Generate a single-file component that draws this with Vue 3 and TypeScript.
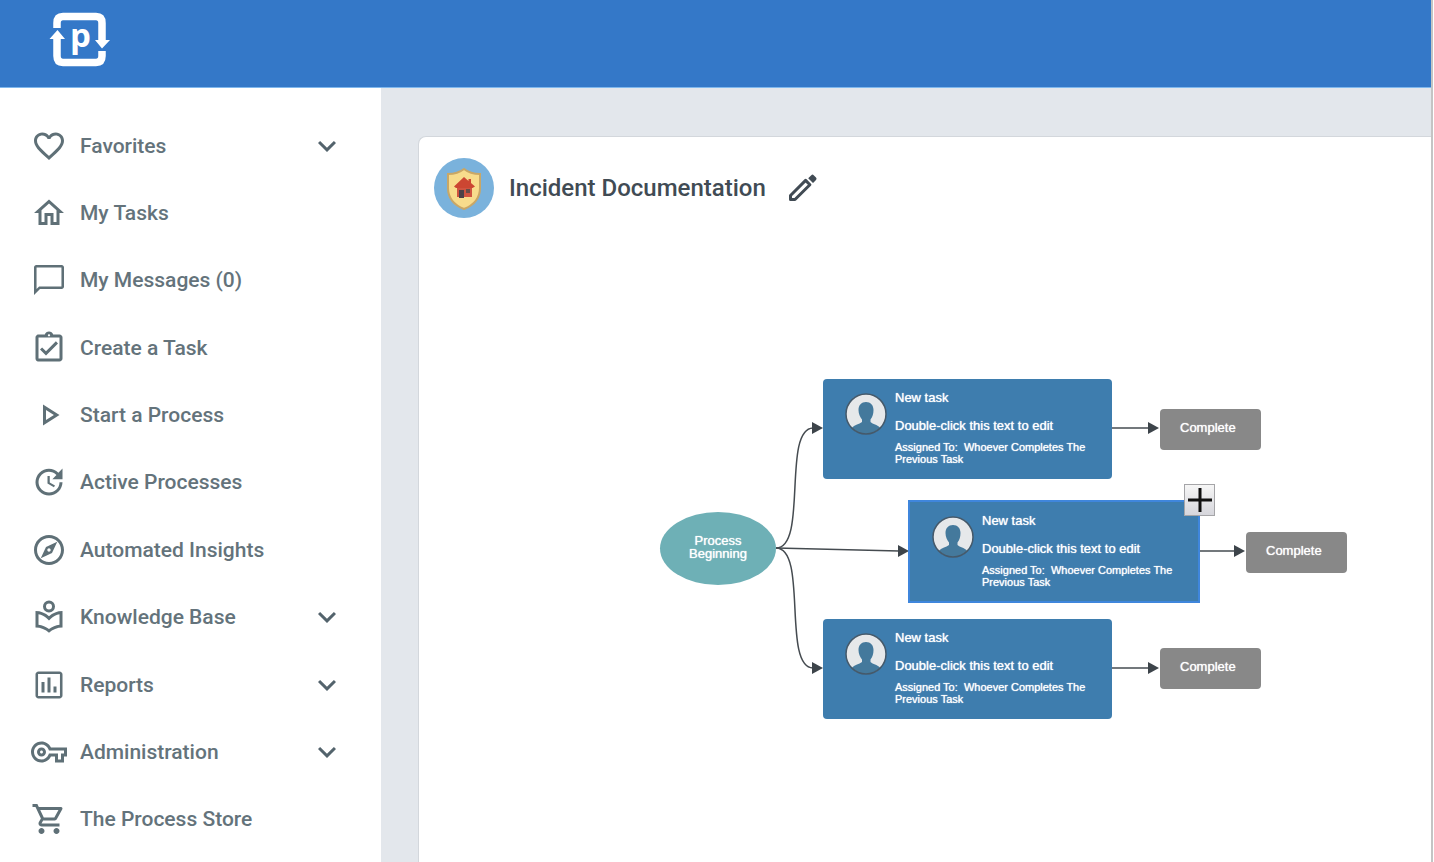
<script setup lang="ts">
interface NavItem {
  label: string
  paths: string[]
  expandable?: boolean
}

interface TaskNode {
  id: number
  place: string
  selected?: boolean
}

const navItems: NavItem[] = [
  {
    label: 'Favorites',
    expandable: true,
    paths: [
      'M16.5 3c-1.74 0-3.41.81-4.5 2.09C10.91 3.81 9.24 3 7.5 3 4.42 3 2 5.42 2 8.5c0 3.78 3.4 6.86 8.55 11.54L12 21.35l1.45-1.32C18.6 15.36 22 12.28 22 8.5 22 5.42 19.58 3 16.5 3zm-4.4 15.55l-.1.1-.1-.1C7.14 14.24 4 11.39 4 8.5 4 6.5 5.5 5 7.5 5c1.54 0 3.04.99 3.57 2.36h1.87C13.46 5.99 14.96 5 16.5 5c2 0 3.5 1.5 3.5 3.5 0 2.89-3.14 5.74-7.9 10.05z',
    ],
  },
  {
    label: 'My Tasks',
    paths: ['M12 5.69l5 4.5V18h-2v-6H9v6H7v-7.81l5-4.5M12 3L2 12h3v8h6v-6h2v6h6v-8h3'],
  },
  {
    label: 'My Messages (0)',
    paths: [
      'M20.5 2h-17C2.7 2 2 2.7 2 3.5V22l4-4h14.5c.8 0 1.5-.7 1.5-1.5v-13c0-.8-.7-1.5-1.5-1.5zm-.2 14.3H5.4l-1.7 1.7V3.7h16.6v12.6z',
    ],
  },
  {
    label: 'Create a Task',
    paths: [
      'M18 9l-1.41-1.42L10 14.17l-2.59-2.58L6 13l4 4zm1-6h-4.18C14.4 1.84 13.3 1 12 1c-1.3 0-2.4.84-2.82 2H5c-.14 0-.27.01-.4.04-.39.08-.74.28-1.01.55-.18.18-.33.4-.43.64-.1.23-.16.49-.16.77v14c0 .27.06.54.16.78s.25.45.43.64c.27.27.62.47 1.01.55.13.02.26.03.4.03h14c1.1 0 2-.9 2-2V5c0-1.1-.9-2-2-2zm-7-.25c.41 0 .75.34.75.75s-.34.75-.75.75-.75-.34-.75-.75.34-.75.75-.75zM19 19H5V5h14v14z',
    ],
  },
  {
    label: 'Start a Process',
    paths: ['M10 8.64L15.27 12 10 15.36V8.64M8 5v14l11-7L8 5z'],
  },
  {
    label: 'Active Processes',
    paths: [
      'M21 10.12H14.22L16.96 7.3C14.23 4.6 9.81 4.5 7.08 7.2C4.35 9.91 4.35 14.28 7.08 17C9.81 19.7 14.23 19.7 16.96 17C18.32 15.65 19 14.08 19 12.1H21C21 14.08 20.12 16.65 18.36 18.39C14.85 21.87 9.15 21.87 5.64 18.39C2.14 14.92 2.11 9.28 5.62 5.81C9.13 2.34 14.76 2.34 18.27 5.81L21 3V10.12M12.5 8V12.25L16 14.33L15.28 15.54L11 13V8H12.5Z',
    ],
  },
  {
    label: 'Automated Insights',
    paths: [
      'M12 2C6.48 2 2 6.48 2 12s4.48 10 10 10 10-4.48 10-10S17.52 2 12 2zm0 18c-4.41 0-8-3.59-8-8s3.59-8 8-8 8 3.59 8 8-3.59 8-8 8zm-5.5-2.5l7.51-3.49L17.5 6.5 9.99 9.99 6.5 17.5zm5.5-6.6c.61 0 1.1.49 1.1 1.1s-.49 1.1-1.1 1.1-1.1-.49-1.1-1.1.49-1.1 1.1-1.1z',
    ],
  },
  {
    label: 'Knowledge Base',
    expandable: true,
    paths: [
      'M12 1a4 4 0 1 0 0 8a4 4 0 1 0 0-8zm0 2a2 2 0 1 1 0 4a2 2 0 1 1 0-4z',
      'M12 11.55C9.64 9.35 6.48 8 3 8v11c3.48 0 6.64 1.35 9 3.55 2.36-2.19 5.52-3.55 9-3.55V8c-3.48 0-6.64 1.35-9 3.55zm7 5.58c-2.53.34-4.93 1.3-7 2.82-2.06-1.52-4.47-2.49-7-2.83v-6.95c2.1.38 4.05 1.35 5.64 2.83L12 14.28l1.36-1.27c1.59-1.48 3.54-2.45 5.64-2.83v6.95z',
    ],
  },
  {
    label: 'Reports',
    expandable: true,
    paths: [
      'M19 3H5c-1.1 0-2 .9-2 2v14c0 1.1.9 2 2 2h14c1.1 0 2-.9 2-2V5c0-1.1-.9-2-2-2zm.3 16.3H4.7V4.7h14.6v14.6zM7 10h2v7H7zm4-3h2v10h-2zm4 6h2v4h-2z',
    ],
  },
  {
    label: 'Administration',
    expandable: true,
    paths: [
      'M22 19h-6v-4h-2.68c-1.14 2.42-3.6 4-6.32 4-3.86 0-7-3.14-7-7s3.14-7 7-7c2.72 0 5.17 1.58 6.32 4H24v6h-2v4zm-4-2h2v-4h2v-2H11.94l-.23-.67C11.01 8.34 9.11 7 7 7c-2.76 0-5 2.24-5 5s2.24 5 5 5c2.11 0 4.01-1.34 4.71-3.33l.23-.67H18v4zM7 15c-1.65 0-3-1.35-3-3s1.35-3 3-3 3 1.35 3 3-1.35 3-3 3zm0-4c-.55 0-1 .45-1 1s.45 1 1 1 1-.45 1-1-.45-1-1-1z',
    ],
  },
  {
    label: 'The Process Store',
    paths: [
      'M15.55 13c.75 0 1.41-.41 1.75-1.03l3.58-6.49c.37-.66-.11-1.48-.87-1.48H5.21l-.94-2H1v2h2l3.6 7.59-1.35 2.44C4.52 15.37 5.48 17 7 17h12v-2H7l1.1-2h7.45zM6.16 6h12.15l-2.76 5H8.53L6.16 6zM7 18c-1.1 0-1.99.9-1.99 2S5.9 22 7 22s2-.9 2-2-.9-2-2-2zm10 0c-1.1 0-1.99.9-1.99 2s.89 2 1.99 2 2-.9 2-2-.9-2-2-2z',
    ],
  },
]

const tasks: TaskNode[] = [
  { id: 1, place: 'top' },
  { id: 2, place: 'middle', selected: true },
  { id: 3, place: 'bottom' },
]
</script>

<template>
  <div class="app">
    <header class="topbar">
      <a class="logo" href="#" aria-label="Home">
        <svg width="64" height="60" viewBox="0 0 64 60">
          <g fill="none" stroke="#fff" stroke-width="7.5">
            <path d="M9 18V13Q9 6.5 15 6.5H48Q54 6.5 54 13V31" />
            <path d="M54 41V46Q54 52.5 48 52.5H15Q9 52.5 9 46V28" />
          </g>
          <path d="M47 30H62L54 38.5ZM1.5 29H17L9.5 20Z" fill="#fff" />
          <text x="22" y="37" class="logo-letter">p</text>
        </svg>
      </a>
    </header>

    <div class="body">
      <nav class="sidebar" aria-label="Main">
        <a v-for="item in navItems" :key="item.label" class="nav-item" href="#">
          <svg class="icon" viewBox="0 0 24 24" aria-hidden="true">
            <path v-for="d in item.paths" :key="d" :d="d" fill-rule="evenodd" />
          </svg>
          <span class="nav-label">{{ item.label }}</span>
          <svg v-if="item.expandable" class="icon chevron" viewBox="0 0 24 24" aria-hidden="true">
            <path d="M16.59 8.59L12 13.17 7.41 8.59 6 10l6 6 6-6z" />
          </svg>
        </a>
      </nav>

      <main class="content">
        <section class="card">
          <div class="card-head">
            <svg class="badge" viewBox="0 0 60 60" aria-hidden="true">
              <circle cx="30" cy="30" r="30" fill="#7ab2dc" />
              <path
                d="M30 11C25 15 20 16 14 16V30C14 40 20 47 30 51C40 47 46 40 46 30V16C40 16 35 15 30 11Z"
                fill="#f8dc8c"
                stroke="#c9a766"
                stroke-width="2"
              />
              <path d="M23 29H38V39H23Z" fill="#cf5440" />
              <path d="M30 19L20 28.5L22 30H38.5L41 28.5L37 25V21H34.5V23Z" fill="#cc4632" />
              <path d="M25 32H30V40H25Z" fill="#4c4148" />
              <path d="M32 31H36V35H32Z" fill="#6a4c48" />
            </svg>
            <h1 class="title">Incident Documentation</h1>
            <button class="edit" type="button" aria-label="Rename process">
              <svg width="30" height="28" viewBox="0 0 30 28">
                <path
                  d="M2.5 25.5V21.5L17.6 6.4L21.9 10.7L7 25.5Z"
                  fill="none"
                  stroke="#414b54"
                  stroke-width="3"
                  stroke-linejoin="round"
                />
                <path d="M20.2 4.2L23.3 1.2Q24.5 0 25.7 1.2L28 3.5Q29.2 4.7 28 5.9L25 9Z" fill="#414b54" />
              </svg>
            </button>
          </div>

          <div class="canvas">
            <svg class="edges" width="860" height="520" viewBox="0 0 860 520" aria-hidden="true">
              <g fill="none" stroke="#454b50" stroke-width="1.5">
                <path d="M357 330C389 330 363 211 394 210" />
                <path d="M357 330L480 333" />
                <path d="M357 330C389 330 363 449 394 450" />
                <path d="M693 210H731" />
                <path d="M781 333H817" />
                <path d="M693 450H731" />
              </g>
              <g fill="#3d444a">
                <path d="M393 204L404 210L393 216Z" />
                <path d="M479 327L490 333L479 339Z" />
                <path d="M393 444L404 450L393 456Z" />
                <path d="M729 204L740 210L729 216Z" />
                <path d="M815 327L826 333L815 339Z" />
                <path d="M729 444L740 450L729 456Z" />
              </g>
            </svg>

            <div class="start">Process<br />Beginning</div>

            <template v-for="task in tasks" :key="task.id">
              <article class="task" :class="[task.place, { selected: task.selected }]">
                <svg class="avatar" viewBox="0 0 42 42" aria-hidden="true">
                  <circle cx="21" cy="21" r="20" fill="#e6e8ea" />
                  <path
                    d="M21 9C16.5 9 13.5 12 13.5 17C13.5 21 15 24 17 26.5V29C14 31.5 10 31.5 7 34.5C10 38.5 15 41 21 41S32 38.5 35 34.5C32 31.5 28 31.5 25.5 29V26.5C27.5 24 28.5 21 28.5 17C28.5 12 25.5 9 21 9Z"
                    fill="#44799c"
                  />
                  <circle cx="21" cy="21" r="20" fill="none" stroke="#45596a" stroke-width="1.5" />
                </svg>
                <div class="task-text">
                  <p>New task</p>
                  <p>Double-click this text to edit</p>
                  <p class="assigned">Assigned To:&nbsp; Whoever Completes The Previous Task</p>
                </div>
              </article>
              <div class="complete" :class="task.place">Complete</div>
            </template>

            <button class="add" type="button" aria-label="Add step">
              <svg width="26" height="26" viewBox="0 0 26 26">
                <path d="M1 13H25M13 1V25" stroke="#111" stroke-width="3" />
              </svg>
            </button>
          </div>
        </section>
      </main>
    </div>
  </div>
</template>

<style>
body {
  margin: 0;
  background: #fff;
}
</style>

<style scoped>
* {
  box-sizing: border-box;
}

.app {
  display: flex;
  flex-direction: column;
  min-height: 100vh;
  margin-right: 1px;
  border-right: 2px solid #c4c4c4;
  background: #fff;
  font-family: Roboto, "Liberation Sans", sans-serif;
}

.topbar {
  display: flex;
  align-items: flex-start;
  height: 88px;
  padding: 10px 48px;
  border-bottom: 1px solid #7fb8ee;
  background: #3478c8;
}

.logo,
.logo svg {
  display: block;
}

.logo-letter {
  fill: #fff;
  font-family: "Open Sans", sans-serif;
  font-size: 33px;
  font-weight: 700;
}

.body {
  display: flex;
  flex: 1;
}

.sidebar {
  display: flex;
  flex-direction: column;
  flex: none;
  width: 381px;
  padding: 24px 36px 9px 31px;
}

.nav-item {
  display: flex;
  flex: 1;
  align-items: center;
  gap: 13px;
  color: #64737b;
  font-size: 21px;
  font-weight: 500;
  line-height: 28px;
  text-decoration: none;
}

.nav-label {
  flex: 1;
}

.icon {
  flex: none;
  width: 36px;
  height: 36px;
  fill: #5f7077;
}

.chevron {
  fill: #53636c;
}

.content {
  display: flex;
  flex: 1;
  min-width: 0;
  padding: 48px 0 0 37px;
  background: #e3e7ec;
}

.card {
  flex: 1;
  min-width: 0;
  border: 1px solid #d3d7dc;
  border-width: 1px 0 0 1px;
  border-radius: 8px 0 0 0;
  background: #fff;
}

.card-head {
  display: flex;
  align-items: center;
  padding: 21px 15px 0;
}

.badge {
  width: 60px;
  height: 60px;
}

.title {
  margin: 0 22px 0 15px;
  color: #414b54;
  font-size: 24px;
  font-weight: 500;
  line-height: 32px;
}

.edit {
  display: flex;
  padding: 0;
  border: 0;
  background: none;
}

.canvas {
  position: relative;
  height: 520px;
  color: #fff;
  font-family: "Liberation Sans", Arial, sans-serif;
  font-size: 13px;
  text-shadow: 0 0 1px #fff;
}

.edges {
  position: absolute;
  left: 0;
  top: 0;
}

.start {
  position: absolute;
  left: 241px;
  top: 294px;
  display: flex;
  align-items: center;
  justify-content: center;
  width: 116px;
  height: 73px;
  padding-bottom: 4px;
  border-radius: 50%;
  background: #6eb0b6;
  line-height: 13px;
  text-align: center;
}

.task {
  position: absolute;
  display: flex;
  gap: 8px;
  width: 289px;
  height: 100px;
  padding: 11px 16px 0 22px;
  border-radius: 4px;
  background: #3e7dae;
}

.task.top {
  left: 404px;
  top: 161px;
}

.task.middle {
  left: 489px;
  top: 282px;
}

.task.bottom {
  left: 404px;
  top: 401px;
}

.task.selected {
  width: 292px;
  height: 103px;
  border: 2px solid #3f86dc;
  border-radius: 0;
}

.avatar {
  flex: none;
  width: 42px;
  height: 42px;
  margin-top: 3px;
}

.task-text {
  flex: 1;
}

.task-text p {
  margin: 0 0 12px;
  line-height: 16px;
}

.task-text p.assigned {
  margin-top: -5px;
  font-size: 11px;
  line-height: 12px;
}

.complete {
  position: absolute;
  width: 101px;
  height: 41px;
  padding-left: 20px;
  border-radius: 4px;
  background: #888;
  line-height: 38px;
}

.complete.top {
  left: 741px;
  top: 191px;
}

.complete.middle {
  left: 827px;
  top: 314px;
}

.complete.bottom {
  left: 741px;
  top: 430px;
}

.add {
  position: absolute;
  left: 765px;
  top: 266px;
  display: flex;
  align-items: center;
  justify-content: center;
  width: 31px;
  height: 32px;
  padding: 0;
  border: 1px solid #a5a5a8;
  background: linear-gradient(#f6f6f6, #d6d6dc);
}
</style>
